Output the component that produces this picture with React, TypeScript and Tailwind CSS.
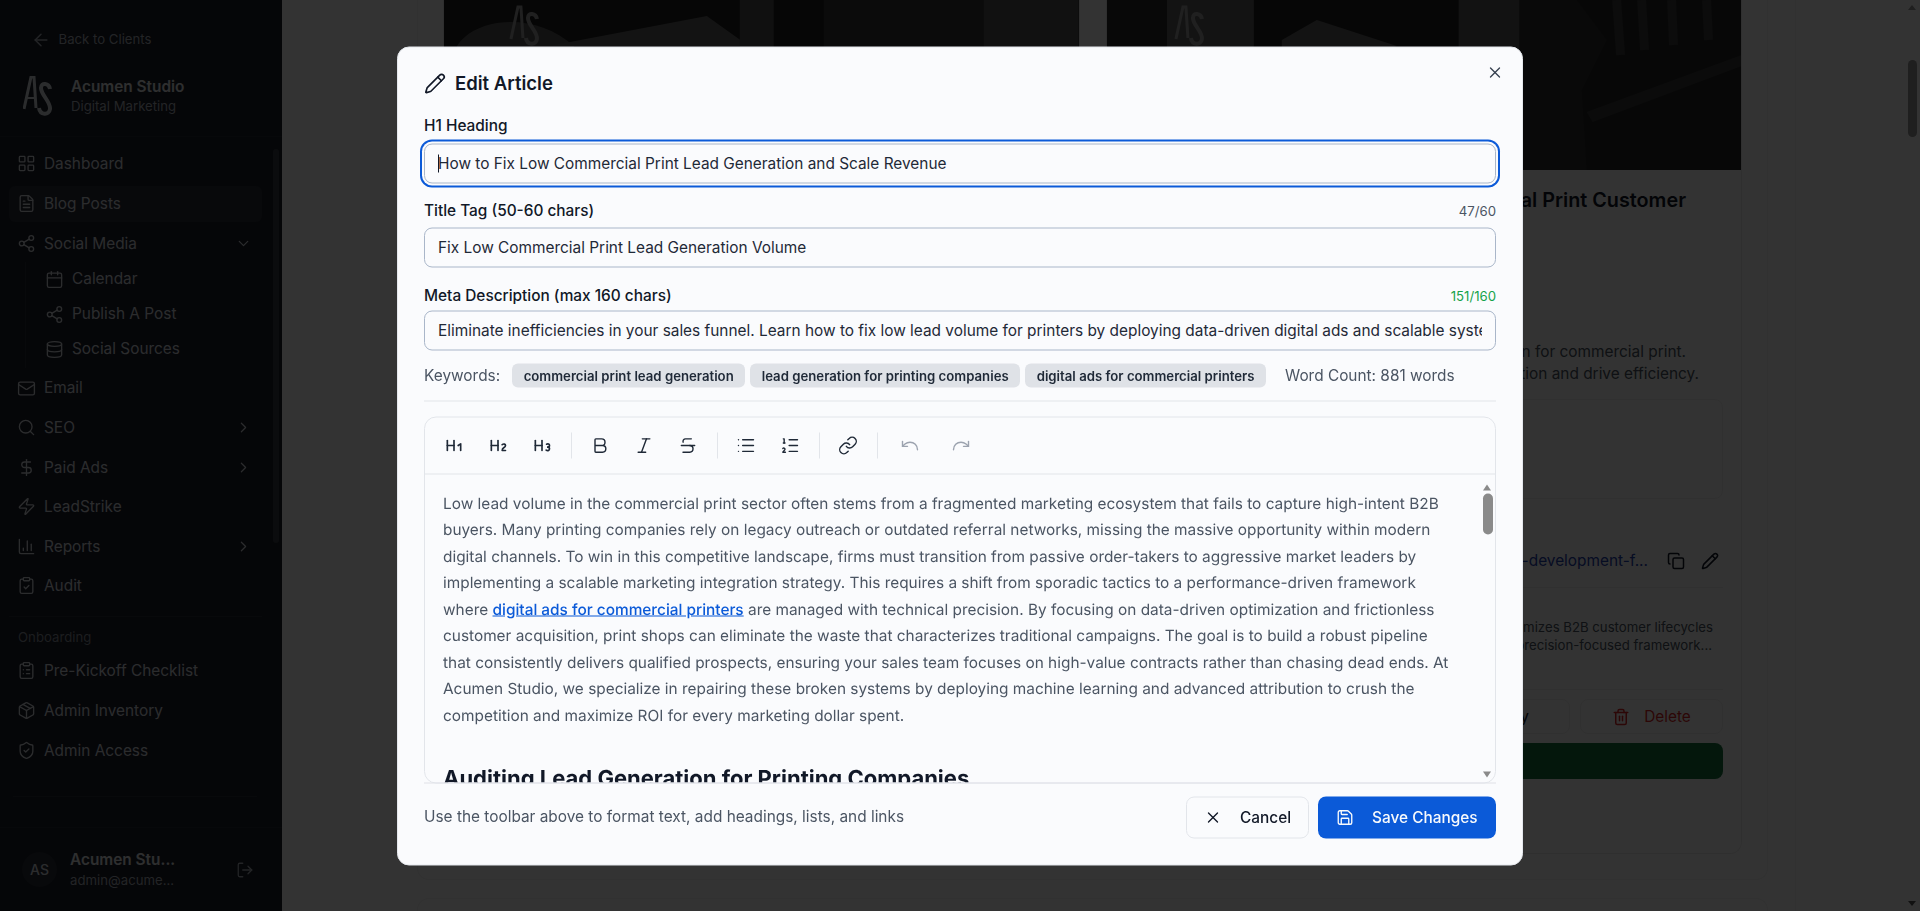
import {
  ArrowLeft, Bold, Calendar, ChevronDown, ChevronRight, ClipboardCheck, ClipboardList, Copy, Database,
  DollarSign, FileText, Heading1, Heading2, Heading3, Italic, LayoutGrid, Link, List, ListOrdered, LogOut,
  Mail, Package, Pencil, Redo, Save, Search, Share2, ShieldCheck, Strikethrough, Trash2, Undo, X, Zap, ChartColumn,
} from "lucide-react";
import type { ReactNode } from "react";

const AsLogo = ({ className }: { className: string }) => (
  <svg viewBox="0 0 30 40" fill="none" stroke="currentColor" className={className}>
    <path d="M1 33 L8 1 L11 1 L13 32" strokeWidth="3" />
    <path d="M4 22 L13 22" strokeWidth="2" />
    <path d="M27 13 C26 7 18 6 18 12 C18 19 28 26 27 33 C26 40 17 39 16 32" strokeWidth="4" />
  </svg>
);

const NavItem = ({ icon, label, right, active }: { icon: ReactNode; label: string; right?: ReactNode; active?: boolean }) => (
  <div className={`flex h-[36px] items-center rounded-md pl-[7.5px] pr-[10px] text-[15.4px] text-[#d8dbe2] ${active ? "bg-[#2a2e38]" : ""}`}>
    <span className="mr-[7.5px] flex w-[20px] shrink-0 justify-center">{icon}</span>
    <span className="flex-1 whitespace-nowrap">{label}</span>
    {right}
  </div>
);

const SubItem = ({ icon, label }: { icon: ReactNode; label: string }) => (
  <div className="flex h-[35px] items-center pl-[35.5px] text-[15.4px] text-[#d8dbe2]">
    <span className="mr-[7.5px] flex w-[20px] shrink-0 justify-center">{icon}</span>
    <span className="whitespace-nowrap">{label}</span>
  </div>
);

const Sidebar = () => (
  <aside className="relative flex h-full w-[282px] shrink-0 flex-col bg-[#1a1e28]">
    <div className="h-[137px] shrink-0 border-b border-[#262a35] pl-[31px] pt-[30px]">
      <div className="flex h-5 items-center text-[13.2px] text-[#aeb3bd]">
        <ArrowLeft size={20} strokeWidth={1.7} className="mr-[7.5px]" />
        Back to Clients
      </div>
      <div className="mt-[26px] flex items-center">
        <AsLogo className="-ml-[8px] mr-[18px] h-[40px] w-[30px] text-[#d8dbe2]" />
        <div>
          <div className="text-[15.4px] font-semibold leading-[20px] text-[#e6e8ec]">Acumen Studio</div>
          <div className="text-[13.2px] leading-[19px] text-[#aeb3bd]">Digital Marketing</div>
        </div>
      </div>
    </div>
    <nav className="flex-1 pl-[9px] pr-[20px] pt-[8.5px]">
      <div className="flex flex-col gap-[4px]">
        <NavItem icon={<LayoutGrid size={19} strokeWidth={1.7} />} label="Dashboard" />
        <NavItem active icon={<FileText size={19} strokeWidth={1.7} />} label="Blog Posts" />
        <NavItem icon={<Share2 size={19} strokeWidth={1.7} />} label="Social Media" right={<ChevronDown size={17} strokeWidth={1.7} />} />
      </div>
      <div className="relative mb-[3.5px] flex flex-col">
        <div className="absolute left-[16px] top-0 h-[106px] w-px bg-[#2c303b]" />
        <SubItem icon={<Calendar size={19} strokeWidth={1.7} />} label="Calendar" />
        <SubItem icon={<Share2 size={19} strokeWidth={1.7} />} label="Publish A Post" />
        <SubItem icon={<Database size={19} strokeWidth={1.7} />} label="Social Sources" />
      </div>
      <div className="flex flex-col gap-[3.6px]">
        <NavItem icon={<Mail size={19} strokeWidth={1.7} />} label="Email" />
        <NavItem icon={<Search size={19} strokeWidth={1.7} />} label="SEO" right={<ChevronRight size={17} strokeWidth={1.7} />} />
        <NavItem icon={<DollarSign size={19} strokeWidth={1.7} />} label="Paid Ads" right={<ChevronRight size={17} strokeWidth={1.7} />} />
        <NavItem icon={<Zap size={19} strokeWidth={1.7} />} label="LeadStrike" />
        <NavItem icon={<ChartColumn size={19} strokeWidth={1.7} />} label="Reports" right={<ChevronRight size={17} strokeWidth={1.7} />} />
        <NavItem icon={<ClipboardCheck size={19} strokeWidth={1.7} />} label="Audit" />
      </div>
      <div className="mt-[12px] border-t border-[#2c303b]" />
      <div className="mt-[11px] pl-[9px] text-[13.2px] leading-[18px] text-[#8a8f9a]">Onboarding</div>
      <div className="mt-[7px] flex flex-col gap-[4px]">
        <NavItem icon={<ClipboardList size={19} strokeWidth={1.7} />} label="Pre-Kickoff Checklist" />
        <NavItem icon={<Package size={19} strokeWidth={1.7} />} label="Admin Inventory" />
        <NavItem icon={<ShieldCheck size={19} strokeWidth={1.7} />} label="Admin Access" />
      </div>
      <div className="ml-[4px] mr-[5px] mt-[27px] border-t border-[#2c303b]" />
    </nav>
    <div className="flex h-[84px] shrink-0 items-center border-t border-[#262a35] pl-[22px] pr-[28px]">
      <div className="flex h-[35px] w-[35px] shrink-0 items-center justify-center rounded-full bg-[#2a2e38] text-[14px] font-medium text-[#d8dbe2]">
        AS
      </div>
      <div className="ml-[13px] flex-1">
        <div className="text-[15.4px] font-semibold leading-[20px] text-[#e6e8ec]">Acumen Stu...</div>
        <div className="text-[13.2px] leading-[20px] text-[#aeb3bd]">admin@acume...</div>
      </div>
      <LogOut size={18} strokeWidth={1.7} className="text-[#aeb3bd]" />
    </div>
    {/* sidebar scrollbar */}
    <div className="absolute left-[272px] top-[138px] h-[688px] w-[10px]">
      <div className="absolute left-[1px] top-[11px] h-[394px] w-[6px] rounded-full bg-[#3a3e48]" />
    </div>
  </aside>
);

const Photo = ({ right }: { right?: boolean }) => (
  <svg viewBox="0 0 635 170" preserveAspectRatio="none" className="block h-[170px] w-full bg-[#3c3c3c]">
    {right ? (
      <>
        <rect x="0" y="0" width="60" height="170" fill="#2a2a2a" />
        <rect x="60" y="0" width="87" height="170" fill="#606060" />
        <rect x="147" y="0" width="205" height="170" fill="#202020" />
        <path d="M175 40 L210 20 L290 46 L260 60 L175 60 Z" fill="#606060" />
        <rect x="352" y="0" width="61" height="170" fill="#5c5c5c" />
        <rect x="413" y="0" width="222" height="170" fill="#262626" />
        <path d="M413 0 L470 0 L500 40 L475 90 L480 170 L413 170 Z" fill="#303030" />
        <path d="M510 0 L514 55 M535 0 L538 50 M565 0 L567 45 M600 0 L602 40" stroke="#3c3c3c" strokeWidth="9" />
        <path d="M480 112 L635 55 L635 66 L486 122 Z" fill="#3a3a3a" />
        <g transform="translate(68 6)" fill="none" stroke="#a0a0a0">
          <path d="M1 33 L8 1 L11 1 L13 32" strokeWidth="3" />
          <path d="M27 13 C26 7 18 6 18 12 C18 19 28 26 27 33 C26 40 17 39 16 32" strokeWidth="4" />
        </g>
      </>
    ) : (
      <>
        <rect x="0" y="0" width="635" height="170" fill="#1f1f1f" />
        <path d="M13 46 C30 18 90 10 130 46 L130 170 L13 170 Z" fill="#585858" />
        <path d="M105 46 L263 16 L305 46 Z" fill="#606060" />
        <rect x="296" y="0" width="34" height="170" fill="#525252" />
        <rect x="380" y="0" width="160" height="170" fill="#3a3a3a" />
        <rect x="540" y="0" width="95" height="170" fill="#585858" />
        <g transform="translate(66 6)" fill="none" stroke="#a0a0a0">
          <path d="M1 33 L8 1 L11 1 L13 32" strokeWidth="3" />
          <path d="M27 13 C26 7 18 6 18 12 C18 19 28 26 27 33 C26 40 17 39 16 32" strokeWidth="4" />
        </g>
      </>
    )}
  </svg>
);

const Page = () => (
  <main className="relative h-full flex-1 overflow-hidden bg-white">
    <div className="h-full w-[1514px] border-r border-[#f2f2f2] pr-[27px]">
      <div className="ml-[135px] h-[880px] rounded-b-xl border-x border-b border-[#f2f2f2] px-[25px]">
        <div className="grid grid-cols-2 gap-[26px]">
          <div className="h-[854px] overflow-hidden rounded-b-xl border-x border-b border-[#ececec]">
            <Photo />
          </div>
          <div className="flex h-[854px] flex-col overflow-hidden rounded-b-xl border-x border-b border-[#ececec]">
            <Photo right />
            <div className="mt-[16px] whitespace-nowrap pr-[55px] text-right text-[19.8px] font-semibold leading-[28px] text-[#111827]">
              Mastering Commercial Print Customer
            </div>
            <div className="mt-[127px] whitespace-nowrap pr-[55px] text-right text-[15.4px] leading-[22px] text-[#4b5563]">
              Build a repeatable acquisition plan for commercial print.
            </div>
            <div className="whitespace-nowrap pr-[42px] text-right text-[15.4px] leading-[22px] text-[#4b5563]">
              Learn how to streamline lead qualification and drive efficiency.
            </div>
            <div className="ml-[18px] mr-[18px] mt-[14px] h-[100px] rounded-lg border border-[#f1f1f1] bg-[#fdfdfd]" />
            <div className="mt-[51px] flex items-center justify-end gap-[16px] whitespace-nowrap pr-[22px] text-[15.4px] leading-[22px] text-[#1e40af]">
              <span className="mr-[3px]">/blog/commercial-print-business-development-f...</span>
              <Copy size={18} className="text-[#111827]" />
              <Pencil size={18} className="text-[#111827]" />
            </div>
            <div className="ml-[18px] mr-[18px] mt-[15px] border-t border-[#eeeeee]" />
            <div className="mt-[30px] whitespace-nowrap pr-[28px] text-right text-[13.2px] leading-[18px] text-[#4b5563]">
              Discover a system that optimizes B2B customer lifecycles
            </div>
            <div className="whitespace-nowrap pr-[29px] text-right text-[13.2px] leading-[18px] text-[#4b5563]">
              with a data-driven, precision-focused framework...
            </div>
            <div className="ml-[18px] mr-[18px] mt-[35px] border-t border-[#eeeeee]" />
            <div className="ml-[18px] mr-[18px] mt-[9px] flex gap-[10px]">
              <div className="flex h-[35px] flex-1 items-center justify-end rounded-lg border border-[#eeeeee] pr-[40px] text-[15.4px] text-[#111827]">Copy</div>
              <div className="flex h-[35px] w-[143px] items-center justify-center gap-[14px] rounded-lg border border-[#eeeeee] text-[15.4px] text-[#dc2626]">
                <Trash2 size={18} />
                Delete
              </div>
            </div>
            <div className="ml-[18px] mr-[18px] mt-[9px] h-[36px] rounded-lg bg-[#16733c]" />
          </div>
        </div>
      </div>
      <div className="ml-[135px] mt-[18px] h-[40px] rounded-t-xl border-x border-t border-[#f2f2f2]" />
    </div>
    {/* page scrollbar */}
    <div className="absolute right-[3px] top-[60px] h-[77px] w-[9px] rounded-full bg-[#999999]" />
    <div className="absolute right-[4px] top-[5px] h-0 w-0 border-x-[4px] border-b-[5px] border-x-transparent border-b-[#999999]" />
    <div className="absolute bottom-[5px] right-[4px] h-0 w-0 border-x-[4px] border-t-[5px] border-x-transparent border-t-[#555555]" />
  </main>
);

const fieldInput = "block h-[40px] w-full rounded-lg border border-[#a9b6c9] bg-[#fafbfd] px-[13px] text-[15.4px] text-[#1f2937] outline-none";

const ToolBtn = ({ children, dim }: { children: ReactNode; dim?: boolean }) => (
  <div className={`flex h-9 w-9 items-center justify-center ${dim ? "text-[#9ca3af]" : "text-[#1f2937]"}`}>{children}</div>
);

const Sep = () => <div className="mx-[10.5px] h-[26px] w-px bg-[#e2e5ea]" />;

const Toolbar = () => (
  <div className="flex h-[57px] shrink-0 items-center gap-0 border-b border-[#e2e5ea] pl-[11px]">
    <div className="flex gap-2">
      <ToolBtn><Heading1 size={20} /></ToolBtn>
      <ToolBtn><Heading2 size={20} /></ToolBtn>
      <ToolBtn><Heading3 size={20} /></ToolBtn>
    </div>
    <Sep />
    <div className="flex gap-2">
      <ToolBtn><Bold size={20} strokeWidth={1.7} /></ToolBtn>
      <ToolBtn><Italic size={20} strokeWidth={1.7} /></ToolBtn>
      <ToolBtn><Strikethrough size={20} strokeWidth={1.7} /></ToolBtn>
    </div>
    <Sep />
    <div className="flex gap-2">
      <ToolBtn><List size={20} strokeWidth={1.7} /></ToolBtn>
      <ToolBtn><ListOrdered size={20} strokeWidth={1.7} /></ToolBtn>
    </div>
    <Sep />
    <ToolBtn><Link size={20} strokeWidth={1.7} /></ToolBtn>
    <Sep />
    <div className="ml-[4px] flex gap-[15px]">
      <ToolBtn dim><Undo size={20} strokeWidth={1.7} /></ToolBtn>
      <ToolBtn dim><Redo size={20} strokeWidth={1.7} /></ToolBtn>
    </div>
  </div>
);

const EditArticleDialog = () => (
  <div className="fixed left-1/2 top-1/2 flex h-[819px] w-[1126px] -translate-x-1/2 -translate-y-1/2 flex-col rounded-xl border border-[#e4e7ec] bg-[#fafbfd] px-[26px] pt-[22px]">
    <button className="absolute right-[18px] top-[16px] text-[#374151]">
      <X size={18} strokeWidth={1.8} />
    </button>
    <div className="flex h-7 items-center gap-[9px] text-[18.5px] font-semibold text-[#111827]">
      <Pencil size={22} strokeWidth={1.8} />
      Edit Article
    </div>
    <div className="mt-[18px] text-[15.4px] font-medium leading-[20px] text-[#111827]">H1 Heading</div>
    <div className="relative mt-[8px]">
      <input readOnly defaultValue="How to Fix Low Commercial Print Lead Generation and Scale Revenue" className={`${fieldInput} ring-2 ring-[#0b5ad8] ring-offset-2 ring-offset-[#fafbfd]`} />
      <span className="absolute left-[14px] top-[11px] h-[18px] w-px bg-[#111827]" />
    </div>
    <div className="mt-[17px] flex items-center justify-between leading-[20px]">
      <span className="text-[15.4px] font-medium text-[#111827]">Title Tag (50-60 chars)</span>
      <span className="text-[13.2px] text-[#4b5563]">47/60</span>
    </div>
    <input readOnly defaultValue="Fix Low Commercial Print Lead Generation Volume" className={`${fieldInput} mt-[7px]`} />
    <div className="mt-[18px] flex items-center justify-between leading-[20px]">
      <span className="text-[15.4px] font-medium text-[#111827]">Meta Description (max 160 chars)</span>
      <span className="text-[13.2px] text-[#16a34a]">151/160</span>
    </div>
    <input
      readOnly
      defaultValue="Eliminate inefficiencies in your sales funnel. Learn how to fix low lead volume for printers by deploying data-driven digital ads and scalable systems that convert."
      className={`${fieldInput} mt-[5px]`}
    />
    <div className="mt-[13px] flex h-6 items-center whitespace-nowrap text-[15.4px] text-[#4b5563]">
      <span className="mr-[12px]">Keywords:</span>
      <div className="flex gap-[5px] text-[13.2px] font-semibold text-[#1f2937]">
        <span className="rounded-md bg-[#dfe2e7] px-[11.5px] leading-[24px]">commercial print lead generation</span>
        <span className="rounded-md bg-[#dfe2e7] px-[11.5px] leading-[24px]">lead generation for printing companies</span>
        <span className="rounded-md bg-[#dfe2e7] px-[11.5px] leading-[24px]">digital ads for commercial printers</span>
      </div>
      <span className="ml-[19px]">Word Count: 881 words</span>
    </div>
    <div className="mt-[13px] border-t border-[#e2e5ea]" />
    <div className="relative mt-[15px] flex h-[367px] flex-col overflow-hidden rounded-t-xl rounded-b-xl border border-[#e2e5ea]">
      <Toolbar />
      <div className="flex-1 overflow-hidden pl-[18px] pr-[40px] pt-[16px] text-[15.4px] leading-[26.5px] text-[#4b5563] [text-rendering:geometricPrecision]">
        <p>
          Low lead volume in the commercial print sector often stems from a fragmented marketing ecosystem that fails to capture high-intent B2B buyers. Many printing companies rely on legacy outreach or outdated referral networks, missing the massive opportunity within modern digital channels. To win in this competitive landscape, firms must transition from passive order-takers to aggressive market leaders by implementing a scalable marketing integration strategy. This requires a shift from sporadic tactics to a performance-driven framework where{" "}
          <a className="font-medium text-[#0b5ad8] underline">digital ads for commercial printers</a>{" "}
          are managed with technical precision. By focusing on data-driven optimization and frictionless customer acquisition, print shops can eliminate the waste that characterizes traditional campaigns. The goal is to build a robust pipeline that consistently delivers qualified prospects, ensuring your sales team focuses on high-value contracts rather than chasing dead ends. At Acumen Studio, we specialize in repairing these broken systems by deploying machine learning and advanced attribution to crush the competition and maximize ROI for every marketing dollar spent.
        </p>
        <h2 className="mt-[34px] text-[22px] font-bold leading-[32px] text-[#111827]">Auditing Lead Generation for Printing Companies</h2>
      </div>
      {/* editor scrollbar */}
      <div className="absolute right-[4px] top-[67px] h-0 w-0 border-x-[4px] border-b-[6px] border-x-transparent border-b-[#8a8a8a]" />
      <div className="absolute right-[2px] top-[76px] h-[41px] w-[10px] rounded-full bg-[#8a8a8a]" />
      <div className="absolute bottom-[5px] right-[4px] h-0 w-0 border-x-[4px] border-t-[6px] border-x-transparent border-t-[#8a8a8a]" />
    </div>
    <div className="-mt-px flex flex-1 items-start justify-between border-t border-[#dfe2e7] pt-[13px]">
      <span className="mt-[10px] text-[15.4px] leading-[20px] text-[#4b5563]">Use the toolbar above to format text, add headings, lists, and links</span>
      <div className="flex gap-[9px]">
        <button className="flex h-[42px] w-[123px] items-center rounded-lg border border-[#e2e5ea] bg-[#fafbfd] pl-[17px] text-[15.4px] font-medium text-[#111827]">
          <X size={18} strokeWidth={1.8} className="mr-[18px]" />
          Cancel
        </button>
        <button className="flex h-[42px] w-[178px] items-center rounded-lg bg-[#0b5ad8] pl-[18px] text-[15.4px] font-medium text-[#f8fafc]">
          <Save size={18} strokeWidth={1.8} className="mr-[18px]" />
          Save Changes
        </button>
      </div>
    </div>
  </div>
);

export default function App() {
  return (
    <div className="relative flex h-[911px] overflow-hidden font-['Inter',sans-serif]">
      <Sidebar />
      <Page />
      <div className="fixed inset-0 bg-black/80" />
      <EditArticleDialog />
    </div>
  );
}
